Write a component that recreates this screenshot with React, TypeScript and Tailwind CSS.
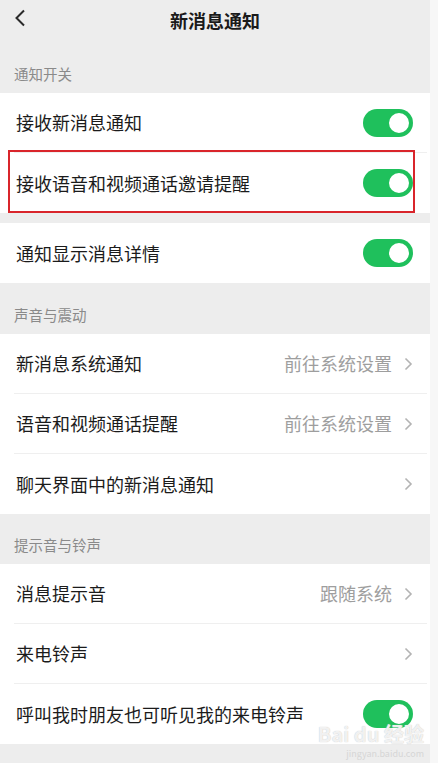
import type { ReactNode } from "react";

const font = { fontFamily: '"Noto Sans CJK SC", "Noto Sans", sans-serif' };

function Toggle() {
  return (
    <div className="flex h-[28px] w-[50px] items-center justify-end rounded-full bg-[#1fc05c] p-[2px]">
      <div className="h-[24px] w-[24px] rounded-full border-2 border-[#1fc05c] bg-white" />
    </div>
  );
}

function Chevron() {
  return (
    <svg width="9" height="14" viewBox="0 0 9 14" className="ml-[12px]">
      <polyline
        points="1.5,1.5 7,7 1.5,12.5"
        fill="none"
        stroke="#b3b3b3"
        strokeWidth="1.6"
      />
    </svg>
  );
}

function Row({
  label,
  right,
  divider = true,
}: {
  label: string;
  right?: ReactNode;
  divider?: boolean;
}) {
  return (
    <div className="bg-white">
      <div
        className={`flex items-center pl-[16px] pr-[17px] ${divider ? "h-[59px]" : "h-[60px]"}`}
      >
        <span className="flex-1 text-[18px] text-[#1b1b1b]">{label}</span>
        {right}
      </div>
      {divider && <div className="ml-[14px] mr-[3px] h-px bg-[#efefef]" />}
    </div>
  );
}

function LinkValue({ text }: { text?: string }) {
  return (
    <div className="flex items-center">
      {text && <span className="text-[18px] text-[#9e9e9e]">{text}</span>}
      <Chevron />
    </div>
  );
}

function SectionLabel({ text, h }: { text: string; h: string }) {
  return (
    <div className={`flex items-end pb-[8px] pl-[14px] ${h}`}>
      <span className="text-[14.5px] text-[#8a8a8a]">{text}</span>
    </div>
  );
}

export default function App() {
  return (
    <div className="flex h-[763px] w-[438px] overflow-hidden" style={font}>
      <div className="relative flex w-[430px] flex-col bg-[#ededed]">
        <header className="relative flex h-[40px] items-center justify-center">
          <svg
            width="12"
            height="18"
            viewBox="0 0 12 18"
            className="absolute left-[14px] top-[9px]"
          >
            <polyline
              points="10,1.5 2.5,9 10,16.5"
              fill="none"
              stroke="#2a2a2a"
              strokeWidth="2"
            />
          </svg>
          <h1 className="text-[18px] font-bold text-[#1a1a1a]">新消息通知</h1>
        </header>

        <SectionLabel text="通知开关" h="h-[53px]" />
        <Row label="接收新消息通知" right={<Toggle />} />
        <div className="relative">
          <Row label="接收语音和视频通话邀请提醒" right={<Toggle />} divider={false} />
          {/* red highlight box from the screenshot */}
          <div className="pointer-events-none absolute -top-[3px] bottom-0 left-[8px] right-[15px] border-2 border-[#d9252b]" />
        </div>
        <div className="h-[10px]" />
        <Row label="通知显示消息详情" right={<Toggle />} divider={false} />

        <SectionLabel text="声音与震动" h="h-[51px]" />
        <Row label="新消息系统通知" right={<LinkValue text="前往系统设置" />} />
        <Row label="语音和视频通话提醒" right={<LinkValue text="前往系统设置" />} />
        <Row label="聊天界面中的新消息通知" right={<LinkValue />} divider={false} />

        <SectionLabel text="提示音与铃声" h="h-[50px]" />
        <Row label="消息提示音" right={<LinkValue text="跟随系统" />} />
        <Row label="来电铃声" right={<LinkValue />} />
        <Row label="呼叫我时朋友也可听见我的来电铃声" right={<Toggle />} divider={false} />
        <div className="flex-1" />

        {/* watermark */}
        <div className="pointer-events-none absolute bottom-[4px] right-[6px] flex flex-col items-end">
          <span className="text-[20px] font-bold leading-[26px] text-white/80 [text-shadow:0_0_1px_#b5b5b5]">
            Bai du 经验
          </span>
          <span className="mt-[1px] text-[9px] leading-[11px] text-[#d6d6d6]">
            jingyan.baidu.com
          </span>
        </div>
      </div>
      <div className="w-[8px] bg-[#f7f7f7]" />
    </div>
  );
}
